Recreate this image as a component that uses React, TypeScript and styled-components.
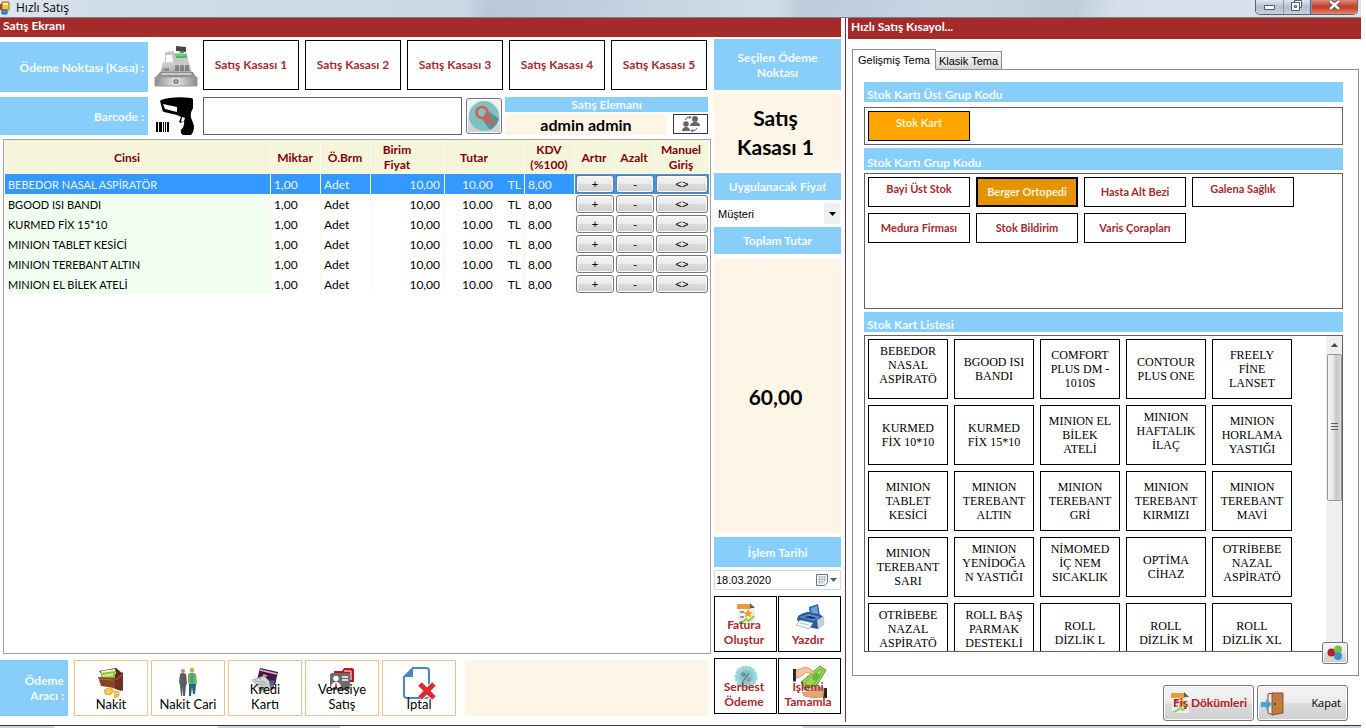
import React from "react";
import styled, { createGlobalStyle, css } from "styled-components";

const sky = "#87cefa";
const cream = "#fdf5e6";
const brick = "#a52a2a";
const sans = `Lato, "Open Sans", sans-serif`;

const GlobalStyle = createGlobalStyle`
  * { box-sizing: border-box; }
  body { margin: 0; background: #fff; font: 12px/15px ${sans}; color: #000; }
  button, input, select { font: inherit; color: inherit; margin: 0; padding: 0; border-radius: 0; }
  svg { display: block; flex: none; }
`;

const Window = styled.div`
  display: flex;
  flex-direction: column;
  height: 100vh;
  min-height: 640px;
  padding-right: 5px;
  overflow: hidden;
`;

/* ---------- window frame ---------- */

const TitleBar = styled.header`
  display: flex;
  flex: none;
  height: 18px;
  border-bottom: 1px solid #7d7f86;
  background: linear-gradient(100deg, #dfe7ef 0%, #cfdbe8 8%, #cbd8e6 34%, #b9c7d6 36%, #c9d6e4 50%, #d0dce9 57%, #bccbd9 59%, #c9d7e5 70%, #c0cedc 79%, #d4dfea 82%, #d9e2ec 100%);
`;

const WindowTitle = styled.h1`
  flex: 1;
  margin: 0;
  padding-left: 6px;
  font: 400 12px/16px "Open Sans", sans-serif;
`;

const WindowButtons = styled.div`
  display: flex;
  height: 15px;
  margin-right: 3px;
  border: 1px solid #5d6470;
  border-top: 0;
  border-radius: 0 0 5px 5px;
  overflow: hidden;
`;

const WindowButton = styled.button<{ $close?: boolean }>`
  display: flex;
  justify-content: center;
  width: ${(p) => (p.$close ? 47 : 27)}px;
  border: 0;
  border-left: ${(p) => (p.$close ? "1px solid #5d6470" : "0")};
  background: ${(p) =>
    p.$close
      ? "linear-gradient(#d98b7c, #c1402a 45%, #c9452c 60%, #e08a6e)"
      : "linear-gradient(#dfe6ee, #b3bfcd 50%, #c6d1dd)"};
  & + & { box-shadow: inset 1px 0 #8b95a3; }
`;

const StatusEdge = styled.footer`
  flex: none;
  height: 3px;
  border-top: 1px solid #33373c;
  background: linear-gradient(90deg, #cdd6de 4%, #fff 4%, #fff 16%, #cdd6de 16%, #cdd6de 25%, #fff 25%, #fff 59%, #cdd6de 59%);
`;

const Body = styled.div`
  display: flex;
  flex: 1;
  min-height: 0;
`;

const PaneTitle = styled.h2<{ $tall?: boolean }>`
  flex: none;
  height: ${(p) => (p.$tall ? 21 : 19)}px;
  margin: 0;
  padding: ${(p) => (p.$tall ? 1 : 0)}px 3px 0;
  background: ${brick};
  color: #fff;
  font: 700 12px/15px ${sans};
`;

/* ---------- sale pane ---------- */

const SalePane = styled.main`
  display: flex;
  flex-direction: column;
  flex: 1;
  min-width: 0;
`;

const SaleColumns = styled.div`
  display: flex;
  flex: 1;
  gap: 3px;
  min-height: 0;
`;

const SaleColumn = styled.div`
  display: flex;
  flex-direction: column;
  flex: 1;
  min-width: 0;
  padding: 3px 0 9px;
`;

const Row = styled.div<{ $height: number }>`
  display: flex;
  flex: none;
  align-items: flex-end;
  height: ${(p) => p.$height}px;
  padding-right: 3px;
  & + & { margin-top: 5px; }
`;

const SideLabel = styled.div<{ $width: number; $height: number }>`
  display: flex;
  align-items: center;
  justify-content: flex-end;
  width: ${(p) => p.$width}px;
  height: ${(p) => p.$height}px;
  padding-right: 4px;
  background: ${sky};
  color: #f5fbff;
  font-weight: 700;
  text-align: right;
`;

const IconSlot = styled.div`
  display: flex;
  align-self: center;
  justify-content: center;
  width: 55px;
`;

const TillList = styled.div`
  display: flex;
  flex: 1;
  gap: 6px;
  height: 52px;
  padding: 0 1px 2px 0;
`;

const outlined = css`
  border: 1px solid #000;
  background: #fff;
  color: ${brick};
  font-weight: 700;
`;

const TillButton = styled.button`
  ${outlined}
  flex: 1;
  padding-bottom: 1px;
`;

const BarcodeInput = styled.input`
  flex: 1;
  min-width: 0;
  height: 38px;
  padding: 0 6px;
  border: 1px solid #5b5d63;
  background: #fff;
`;

const glossy = css`
  border: 1px solid #74777b;
  border-radius: 3px;
  background: linear-gradient(#f4f4f4, #ebebeb 48%, #dcdcdc 52%, #cfcfcf);
  box-shadow: inset 0 0 0 1px #fcfcfc;
`;

const SearchButton = styled.button`
  ${glossy}
  display: grid;
  place-items: center;
  width: 36px;
  height: 36px;
  margin: 0 3px 1px 4px;
`;

const Seller = styled.section`
  display: flex;
  flex-wrap: wrap;
  align-content: space-between;
  justify-content: space-between;
  width: 203px;
  height: 38px;
`;

const SellerTitle = styled.h3`
  width: 100%;
  margin: 0;
  background: ${sky};
  color: #f5fbff;
  font: 700 12px/15px ${sans};
  text-align: center;
`;

const SellerName = styled.div`
  width: 162px;
  background: ${cream};
  font: 700 16px/21px ${sans};
  text-align: center;
`;

const SellerButton = styled.button`
  display: grid;
  place-items: center;
  width: 35px;
  height: 20px;
  border: 1px solid #33373d;
  background: #fff;
`;

/* ---------- basket table ---------- */

const BasketFrame = styled.div`
  flex: 1;
  min-height: 0;
  margin: 4px 0 6px 3px;
  padding: 0 1px;
  border: 1px solid #a0a0a0;
  overflow: hidden;
`;

const Basket = styled.table`
  width: 100%;
  border-collapse: separate;
  border-spacing: 0;
  table-layout: fixed;
  thead tr { height: 34px; }
`;

const Col = styled.col<{ $w?: number }>`
  width: ${(p) => (p.$w ? p.$w + "px" : "auto")};
`;

const HeadCell = styled.th<{ $sortable?: boolean }>`
  padding: 0 ${(p) => (p.$sortable ? 21 : 1)}px 0 0;
  background: #f5f5dc;
  color: #800000;
  border-right: 1px solid #fbfbef;
`;

const BasketRow = styled.tr<{ $selected: boolean }>`
  height: 20px;
  color: ${(p) => (p.$selected ? "#e9f4ff" : "#000")};
  background: ${(p) => (p.$selected ? "#3399ff" : "#fff")};
  td:first-child {
    background: ${(p) => (p.$selected ? "#3399ff" : "#f0fff0")};
    font-size: 11px;
  }
`;

const Cell = styled.td<{ $right?: boolean; $pad?: number }>`
  height: 20px;
  padding: 1px ${(p) => p.$pad ?? 3}px 0 3px;
  border-right: 1px solid ${cream};
  text-align: ${(p) => (p.$right ? "right" : "left")};
  white-space: nowrap;
  line-height: 15px;
`;

const Currency = styled.span`
  margin-left: 15px;
`;

const ActionCell = styled.td`
  height: 20px;
  padding: 0 1px;
`;

const CellButton = styled.button`
  ${glossy}
  display: block;
  width: 100%;
  height: 18px;
  color: #000;
  font: 11px/14px "Liberation Sans", sans-serif;
`;

/* ---------- payment tools ---------- */

const PaymentList = styled.div`
  display: flex;
  gap: 3px;
  padding: 0 9px 0 6px;
`;

const IconTile = styled.button<{ $framed?: boolean }>`
  position: relative;
  display: flex;
  align-items: flex-end;
  justify-content: center;
  height: 56px;
  background: #fff;
  ${(p) =>
    p.$framed
      ? css`
          flex: 1;
          border: 1px solid #000;
          color: ${brick};
          font-weight: 700;
          padding: 0 3px 4px 0;
        `
      : css`
          width: 74px;
          border: 1px solid #ecc291;
          font-size: 13px;
          padding: 0 0 3px;
        `}
  svg {
    position: absolute;
    top: 6px;
    left: 50%;
    transform: translateX(-50%);
  }
  span { position: relative; }
`;

const PaymentNote = styled.div`
  flex: 1;
  height: 56px;
  background: ${cream};
`;

/* ---------- totals column ---------- */

const TotalsColumn = styled.aside`
  display: flex;
  flex-direction: column;
  width: 127px;
  gap: 3px;
  padding: 2px 0 11px;
`;

const TotalsTitle = styled.h3<{ $height: number }>`
  display: grid;
  place-items: center;
  flex: none;
  height: ${(p) => p.$height}px;
  margin: 0;
  padding: 0 12px;
  background: ${sky};
  color: #f5fbff;
  font: 700 12px/15px ${sans};
  text-align: center;
`;

const TotalsValue = styled.div<{ $fill?: boolean }>`
  display: grid;
  place-items: center;
  height: 77px;
  padding: 0 20px 0 16px;
  background: ${cream};
  font: 700 21px/29px ${sans};
  text-align: center;
  ${(p) => p.$fill && css`flex: 1; height: auto; margin: 2px 0 1px;`}
`;

const PickerRow = styled.div<{ $framed?: boolean }>`
  position: relative;
  flex: none;
  height: ${(p) => (p.$framed ? 20 : 21)}px;
  border: ${(p) => (p.$framed ? "1px solid #d5dbe3" : "0")};
  font: 12px/18px "Liberation Sans", sans-serif;
`;

const PriceSelect = styled.select`
  width: 100%;
  height: 100%;
  padding-left: 4px;
  border: 0;
  background: #fff;
  appearance: none;
  font-size: 11px;
`;

const DateInput = styled.input`
  width: 100%;
  height: 100%;
  padding-left: 1px;
  border: 0;
  background: #fff;
  font-size: 11px;
`;

const PickerMark = styled.span<{ $plain?: boolean }>`
  position: absolute;
  top: 0;
  right: 1px;
  bottom: 0;
  display: flex;
  align-items: center;
  justify-content: center;
  gap: 2px;
  width: ${(p) => (p.$plain ? 26 : 16)}px;
  background: ${(p) => (p.$plain ? "#fff" : "#efefef")};
  pointer-events: none;
`;

const TileGrid = styled.div`
  display: flex;
  flex: none;
  gap: 1px;
  margin-top: 3px;
`;

/* ---------- shortcut pane ---------- */

const Divider = styled.div`
  width: 1px;
  margin: 0 2px 3px 4px;
  background: #8b2a34;
`;

const ShortcutPane = styled.aside`
  display: flex;
  flex-direction: column;
  width: 513px;
`;

const Tabs = styled.div`
  position: relative;
  display: flex;
  align-items: flex-end;
  flex: none;
  height: 31px;
  margin: 0 2px -1px 4px;
`;

const Tab = styled.button<{ $active?: boolean }>`
  width: ${(p) => (p.$active ? 84 : 66)}px;
  height: ${(p) => (p.$active ? 21 : 19)}px;
  border: 1px solid #8a8c91;
  border-bottom-color: ${(p) => (p.$active ? "#fff" : "#8a8c91")};
  border-left-width: ${(p) => (p.$active ? 1 : 0)}px;
  background: ${(p) => (p.$active ? "#fff" : "linear-gradient(#f3f3f3, #ebebeb 50%, #d4d4d4)")};
  font: 11px/16px "Liberation Sans", sans-serif;
  white-space: nowrap;
`;

const TabPanel = styled.div`
  display: flex;
  flex-direction: column;
  flex: 1;
  gap: 3px;
  min-height: 0;
  margin: 0 2px 9px 4px;
  padding: 12px 15px 23px 11px;
  border: 1px solid #8a8c91;
`;

const GroupTitle = styled.h3<{ $tall?: boolean }>`
  flex: none;
  height: ${(p) => (p.$tall ? 22 : 20)}px;
  margin: 0;
  padding: ${(p) => (p.$tall ? 7 : 5)}px 3px 0;
  background: ${sky};
  color: #f5fbff;
  font: 700 12px/15px ${sans};
`;

const GroupBox = styled.div<{ $height: number; $spaced?: boolean }>`
  display: flex;
  flex-wrap: wrap;
  align-content: flex-start;
  flex: none;
  gap: 6px;
  height: ${(p) => p.$height}px;
  margin-top: ${(p) => (p.$spaced ? 2 : 0)}px;
  padding: 3px;
  border: 1px solid #5f6165;
`;

const GroupButton = styled.button<{ $state?: "open" | "picked"; $raised?: boolean }>`
  ${outlined}
  width: 102px;
  height: 30px;
  padding-bottom: ${(p) => (p.$raised ? 7 : 1)}px;
  font-size: 11px;
  ${(p) => p.$state === "open" && css`background: #ffa500; color: #fff4d8;`}
  ${(p) => p.$state === "picked" && css`background: #e59400; color: #fff4d8; border-width: 2px;`}
`;

const StockBox = styled.div`
  position: relative;
  display: flex;
  flex: 1;
  min-height: 0;
  border: 1px solid #5f6165;
`;

const StockCards = styled.div`
  display: flex;
  flex-wrap: wrap;
  align-content: flex-start;
  flex: 1;
  gap: 6px;
  padding: 3px 0 0 3px;
  overflow: hidden;
`;

const StockCard = styled.button<{ $raised?: boolean }>`
  width: 80px;
  height: 60px;
  padding-bottom: ${(p) => (p.$raised ? 8 : 0)}px;
  border: 1px solid #000;
  background: #fff;
  font: 12px/14px "Liberation Serif", serif;
  white-space: pre-line;
`;

const ScrollTrack = styled.div`
  display: flex;
  flex-direction: column;
  align-items: center;
  width: 16px;
  background: #efefef;
`;

const ScrollThumb = styled.div`
  display: grid;
  place-items: center;
  width: 15px;
  height: 147px;
  margin-top: 6px;
  border: 1px solid #979797;
  border-radius: 2px;
  background: linear-gradient(90deg, #f5f5f5, #e3e4e6 45%, #c6c7cb 60%, #d9dadd);
`;

const ColorButton = styled.button`
  ${glossy}
  position: absolute;
  right: -6px;
  bottom: -13px;
  display: grid;
  place-items: center;
  width: 26px;
  height: 22px;
`;

const PaneActions = styled.div`
  display: flex;
  justify-content: flex-end;
  gap: 3px;
  padding: 0 13px 4px 0;
`;

const PaneButton = styled.button<{ $strong?: boolean }>`
  ${glossy}
  position: relative;
  display: flex;
  align-items: center;
  justify-content: flex-end;
  width: 91px;
  height: 36px;
  padding-right: 6px;
  font: ${(p) => (p.$strong ? `700 12px/16px ${sans}` : `11px/16px "Open Sans", sans-serif`)};
  color: ${(p) => (p.$strong ? "#b02028" : "#000")};
  white-space: nowrap;
  svg {
    position: absolute;
    top: 6px;
    left: ${(p) => (p.$strong ? 6 : 3)}px;
  }
  span { position: relative; }
`;

/* ---------- drawings ---------- */

const FormIcon = () => (
  <svg width="10" height="16" viewBox="0 0 10 16">
    <path d="M0 4h3v6H0z" fill="#a33b2c" />
    <path d="M2 2h7v8H2z" fill="#f3c33c" stroke="#9a7420" />
    <path d="M3 3h5v2H3z" fill="#fff0a8" />
    <path d="M2 10h5v4H2z" fill="#4d8fd6" stroke="#2c5c94" />
  </svg>
);

const RegisterIcon = () => (
  <svg width="44" height="44" viewBox="0 0 44 44">
    <defs>
      <linearGradient id="steel" x1="0" x2="0" y1="0" y2="1">
        <stop offset="0" stopColor="#d6d6d6" />
        <stop offset="1" stopColor="#a2a2a2" />
      </linearGradient>
      <linearGradient id="drawer" x1="0" x2="1">
        <stop offset="0" stopColor="#8c8c8c" />
        <stop offset=".5" stopColor="#e6e6e6" />
        <stop offset="1" stopColor="#8c8c8c" />
      </linearGradient>
    </defs>
    <path d="M22 2l10 1v5l-10-1z" fill="#44484a" />
    <path d="M26 7h4v3h-4z" fill="#777" />
    <path d="M11 8l9-1v13h-9z" fill="#c6c6c6" />
    <path d="M9 18h26l3 12H6z" fill="url(#steel)" />
    <path d="M20 9h13l2 11H20z" fill="#c9c9c9" />
    <path d="M21 10h11l1 4H22z" fill="#3fbf55" />
    <path d="M22 11h9" stroke="#9be6a4" />
    <path d="M12 11h6l1 7h-7z" fill="#fff" />
    <path d="M21 22h14M21 24h15M21 26h15" stroke="#4c4c4c" strokeDasharray="4 1" />
    <path d="M10 24h5v3h-6z" fill="#8d8d8d" />
    <path d="M6 28h33l3 5H2z" fill="#8f8f8f" />
    <path d="M8 29h29l1 2H7z" fill="#c9c9c9" />
    <path d="M1 33h42v9H1z" fill="url(#drawer)" stroke="#9a9a9a" />
    <circle cx="22" cy="37.500" r="2.500" fill="#777" />
    <circle cx="22" cy="37.500" r="1" fill="#ddd" />
  </svg>
);

const ScannerIcon = () => (
  <svg width="42" height="38" viewBox="0 0 42 38">
    <path d="M6 3Q18-1 36 1L38 2V11Q34 18 37 23L39 29Q39 35 36 38H28Q25 36 26 33 30 29 29 24L26 26 24 25 26 20 22 18 9 15Q7 14 7 11L5 4z" fill="#000" />
    <path d="M8 7L22 10V15L10 12z" fill="#fff" />
    <path d="M27 20l3 1-1 3-3 1z" fill="#fff" />
    <path d="M2 25v10M6 25v10M13 25v10" stroke="#000" strokeWidth="2" />
    <path d="M4.500 25v10M8.500 25v10M10.500 25v10" stroke="#000" strokeWidth="1" />
  </svg>
);

const SearchIcon = () => (
  <svg width="30" height="30" viewBox="0 0 30 30">
    <circle cx="15" cy="15" r="15" fill="#7fc0c3" />
    <path d="M18 9l12 9Q27 26 21 29L13 18z" fill="#5c9092" />
    <circle cx="13" cy="11.500" r="5.500" fill="none" stroke="#e0574c" strokeWidth="2.600" />
    <path d="M17 16l5 5" stroke="#e0574c" strokeWidth="4" strokeLinecap="round" />
  </svg>
);

const SwapUsersIcon = () => (
  <svg width="20" height="16" viewBox="0 0 20 16" fill="#666">
    <circle cx="14" cy="3" r="3" />
    <path d="M9 10q0-3 3.500-4h3Q19 7 19 10z" />
    <circle cx="5" cy="8" r="2.800" />
    <path d="M1 15q0-3 3-4h2q3 1 3 4z" />
    <path d="M4 4q1-3 5-3M16 12q-1 3-5 3" fill="none" stroke="#666" />
    <path d="M8 0l3 1-3 2zM12 13l-3 2 3 1z" />
  </svg>
);

const WalletIcon = () => (
  <svg width="28" height="32" viewBox="0 0 28 32">
    <path d="M2 4L19 1l6 5-1 18-8-3z" fill="#5c2b1c" />
    <path d="M4 4l14-2 1 5-14 3z" fill="#fff3c8" />
    <path d="M4 6l14-2v7L4 12z" fill="#8ac43f" />
    <path d="M5 8l11-2v3L6 10z" fill="#d8ea8c" />
    <path d="M1 10l17 1v10L4 19z" fill="#8a4128" />
    <path d="M18 11l8-6v19l-8-4z" fill="#6e2f1e" />
    <path d="M2 12l15 1M19 13l6-5" stroke="#b86b48" />
    <path d="M7 23l7-3 3 4-4 4-5-1zM18 24l4 1v4l-5 2z" fill="#f2ba3b" stroke="#d4902a" strokeWidth=".6" />
    <path d="M9 24l4-2M10 26l4-2M18 27l3-1" stroke="#fff0b0" />
  </svg>
);

const PeopleIcon = () => (
  <svg width="20" height="30" viewBox="0 0 20 30">
    <circle cx="5" cy="4" r="2" fill="#b98a6c" />
    <path d="M2 7q3-2 6 0l1 9-1 3-1 10H5l0-8-1 8H3L2 18 1 15z" fill="#5b5d61" />
    <circle cx="14" cy="3" r="2.200" fill="#d2a04d" />
    <path d="M12 2q2-3 4 0z" fill="#f0c52c" />
    <path d="M10 7q4-3 8 0l1 9-1 2h-7l-1-3z" fill="#78b544" />
    <path d="M13 6h2l1 10h-4z" fill="#3f9bb8" />
    <path d="M11 17h7l-1 10h-2l-1-7-1 9h-2z" fill="#26627f" />
  </svg>
);

const CardsIcon = () => (
  <svg width="28" height="28" viewBox="0 0 28 28">
    <path d="M9 1l18 4-3 13-18-5z" fill="#4a1942" />
    <path d="M9 3l17 4M12 8l4 1" stroke="#d9b7cf" strokeWidth="1.500" />
    <path d="M1 13l12-4 8 8-11 5z" fill="#d6d6d6" stroke="#999" strokeWidth=".7" />
    <path d="M4 14l11 2M6 17l10 1M8 11l9 8" stroke="#a8a8a8" />
    <path d="M6 19l14-3 2 6-13 5z" fill="#c6c9cc" />
    <path d="M18 14l5-1v5l-4 1z" fill="#2f69a8" />
    <path d="M19 19l4-1v4l-3 1z" fill="#d8402f" />
    <path d="M8 21l5-1v3l-4 1z" fill="#55a348" />
  </svg>
);

const IdCardsIcon = () => (
  <svg width="24" height="24" viewBox="0 0 24 24">
    <path d="M4 6V4h8l2-3h8q2 0 2 2v12h-5V6z" fill="#c41320" />
    <path d="M14 4h7v9" fill="none" stroke="#fff" />
    <rect x="0" y="6" width="20" height="17" rx="2" fill="#6c6c6c" />
    <circle cx="6" cy="11.500" r="2.700" fill="#fff" />
    <path d="M1 21q0-5 4-6h2q4 1 4 6z" fill="#fff" />
    <path d="M6 15l1 5-1 1-1-1z" fill="#c41320" />
    <path d="M12 10h6M12 13h6" stroke="#fff" strokeWidth="1.500" />
  </svg>
);

const CancelIcon = () => (
  <svg width="34" height="34" viewBox="0 0 34 34">
    <path d="M11 1h13q3 0 3 3v24q0 3-3 3H5q-3 0-3-3V10z" fill="#fff" stroke="#4a86c5" strokeWidth="2" />
    <path d="M11 1v9H2z" fill="#4a86c5" />
    <path d="M18 17l14 14M32 17L18 31" stroke="#fff" strokeWidth="7" />
    <path d="M18 17l14 14M32 17L18 31" stroke="#dd2c2f" strokeWidth="5" />
  </svg>
);

const ReportIcon = () => (
  <svg width="20" height="22" viewBox="0 0 20 22">
    <path d="M2 1h13l4 4v16H2z" fill="#eceff0" />
    <path d="M1 1h14v5H1z" fill="#ee9b35" />
    <path d="M14 0l5 5h-5z" fill="#56616a" />
    <path d="M4 9h4M4 14h4" stroke="#8b979d" strokeWidth="2" />
    <path d="M12 6l1.500 3 3 .5-2 2 .5 3-3-1.500-3 1.500.6-3-2-2 3-.5z" fill="#f6a21d" />
    <path d="M3 20q5-1 7-4l3 2 5-5" fill="none" stroke="#90cf52" strokeWidth="2" />
  </svg>
);

const PrinterIcon = () => (
  <svg width="30" height="28" viewBox="0 0 30 28">
    <path d="M14 4l9-3 2 12-10 1z" fill="#2f66ad" />
    <path d="M16 5l6-2 1 8-6 1z" fill="#6ba3de" />
    <path d="M3 13q6-4 11-4l12 3q4 3 3 9l-6 5-15-3-6-6z" fill="#2a5896" />
    <path d="M4 14l10-3 11 3-6 4z" fill="#5c93d3" />
    <path d="M8 14l7-1 7 2-4 1z" fill="#14305a" />
    <path d="M22 17l7-4v8l-6 5z" fill="#c5cdd7" />
    <path d="M5 17l13 3-4 6-13-4z" fill="#f1f6fa" stroke="#97a8b9" strokeWidth=".7" />
    <path d="M5 20l9 2" stroke="#a9c8e6" />
  </svg>
);

const PercentIcon = () => (
  <svg width="24" height="24" viewBox="0 0 24 24">
    <circle cx="12" cy="12" r="10.500" fill="#9ed5da" />
    <circle cx="12" cy="12" r="10.500" fill="none" stroke="#9ed5da" strokeWidth="2" strokeDasharray="3 1" />
    <circle cx="12" cy="12" r="7" fill="#86c6cc" />
    <g stroke="#3f5c6e" fill="none">
      <path d="M15 8l-6 8" />
      <circle cx="9.500" cy="9.500" r="1.500" />
      <circle cx="14.500" cy="14.500" r="1.500" stroke="#d75a4e" />
    </g>
  </svg>
);

const HandoverIcon = () => (
  <svg width="34" height="34" viewBox="0 0 34 34">
    <path d="M8 17L27 1l6 4-9 15-12 5z" fill="#9ad65a" stroke="#5d9c2c" />
    <path d="M12 17L27 4l3 2-8 12-8 4z" fill="none" stroke="#6fb03a" />
    <ellipse cx="23" cy="12" rx="4" ry="3" fill="#6fb03a" transform="rotate(-45 23 12)" />
    <path d="M0 4h3v12H0z" fill="#22252a" />
    <path d="M3 5l10-3q7 2 8 6l-2 1-6-2-3 3q-3 3-7 3z" fill="#f3c49b" stroke="#b97f52" strokeWidth=".6" />
    <path d="M31 23h3v10h-4z" fill="#22252a" />
    <path d="M31 23l-9-1-7 5-6 0 2 4 10 2 9-1z" fill="#e6a678" stroke="#b97f52" strokeWidth=".6" />
  </svg>
);

const DoorIcon = () => (
  <svg width="23" height="24" viewBox="0 0 23 24">
    <path d="M7 2l5-1v22l-5-2z" fill="#f4efe6" stroke="#7b4a24" />
    <path d="M11 1h11v20l-11 2z" fill="#c27a41" stroke="#8c5226" />
    <circle cx="14" cy="12" r="1" fill="#5b3115" />
    <path d="M0 10h5V7l6 5-6 6v-3H0z" fill="#4aa3d8" />
  </svg>
);

const ColorsIcon = () => (
  <svg width="16" height="16" viewBox="0 0 16 16">
    <circle cx="4.500" cy="7.500" r="4" fill="#b3202a" />
    <circle cx="11" cy="4.500" r="4" fill="#7cc242" />
    <circle cx="11" cy="11" r="4" fill="#3a94cf" />
  </svg>
);

const DownArrow = ({ color }: { color: string }) => (
  <svg width="7" height="4" viewBox="0 0 7 4">
    <path d="M0 0h7L3.500 4z" fill={color} />
  </svg>
);

const CalendarIcon = () => (
  <svg width="12" height="12" viewBox="0 0 12 12">
    <path d="M.5.5h11v8l-3 3h-8z" fill="#f3f5f8" stroke="#6a7280" />
    <path d="M2 3h8M2 5.500h8M2 8h6M3.500 2v8M6 2v8M8.500 2v6" stroke="#a8b0bd" strokeWidth=".8" />
  </svg>
);

/* ---------- data ---------- */

const tills = [1, 2, 3, 4, 5].map((n) => `Satış Kasası ${n}`);

const basket = [
  "BEBEDOR NASAL ASPİRATÖR",
  "BGOOD ISI BANDI",
  "KURMED FİX 15*10",
  "MINION TABLET KESİCİ",
  "MINION TEREBANT ALTIN",
  "MINION EL BİLEK ATELİ",
];

const payments = [
  { label: "Nakit", icon: <WalletIcon /> },
  { label: "Nakit Cari", icon: <PeopleIcon /> },
  { label: "Kredi\nKartı", icon: <CardsIcon /> },
  { label: "Veresiye\nSatış", icon: <IdCardsIcon /> },
  { label: "İptal", icon: <CancelIcon /> },
];

const groups: { label: string; raised?: boolean; picked?: boolean }[] = [
  { label: "Bayi Üst Stok", raised: true },
  { label: "Berger Ortopedi", picked: true },
  { label: "Hasta Alt Bezi" },
  { label: "Galena Sağlık", raised: true },
  { label: "Medura Firması" },
  { label: "Stok Bildirim" },
  { label: "Varis Çorapları" },
];

const stock: [string, boolean?][] = [
  ["BEBEDOR\nNASAL\nASPİRATÖ", true],
  ["BGOOD ISI\nBANDI"],
  ["COMFORT\nPLUS DM -\n1010S"],
  ["CONTOUR\nPLUS ONE"],
  ["FREELY\nFİNE\nLANSET"],
  ["KURMED\nFİX 10*10"],
  ["KURMED\nFİX 15*10"],
  ["MINION EL\nBİLEK\nATELİ"],
  ["MINION\nHAFTALIK\nİLAÇ", true],
  ["MINION\nHORLAMA\nYASTIĞI"],
  ["MINION\nTABLET\nKESİCİ"],
  ["MINION\nTEREBANT\nALTIN"],
  ["MINION\nTEREBANT\nGRİ"],
  ["MINION\nTEREBANT\nKIRMIZI"],
  ["MINION\nTEREBANT\nMAVİ"],
  ["MINION\nTEREBANT\nSARI"],
  ["MINION\nYENİDOĞA\nN YASTIĞI", true],
  ["NİMOMED\nİÇ NEM\nSICAKLIK", true],
  ["OPTİMA\nCİHAZ"],
  ["OTRİBEBE\nNAZAL\nASPİRATÖ", true],
  ["OTRİBEBE\nNAZAL\nASPİRATÖ", true],
  ["ROLL BAŞ\nPARMAK\nDESTEKLİ", true],
  ["ROLL\nDİZLİK L"],
  ["ROLL\nDİZLİK M"],
  ["ROLL\nDİZLİK XL"],
];

const TileLabel = styled.span`
  white-space: pre-line;
`;

export default function App() {
  return (
    <Window>
      <GlobalStyle />
      <TitleBar>
        <FormIcon />
        <WindowTitle>Hızlı Satış</WindowTitle>
        <WindowButtons>
          <WindowButton aria-label="Simge durumuna küçült">
            <svg width="13" height="12" viewBox="0 0 13 12">
              <path d="M1.500 5.500h10v4h-10z" fill="#fff" stroke="#555b66" />
            </svg>
          </WindowButton>
          <WindowButton aria-label="Önceki boyut">
            <svg width="13" height="12" viewBox="0 0 13 12">
              <path d="M4.500 .5h7v7h-7z" fill="#fff" stroke="#555b66" />
              <path d="M1.500 2.500h8v8h-8z" fill="#fff" stroke="#555b66" />
              <path d="M4.500 5.500h2v2h-2z" fill="#b8c3d0" stroke="#555b66" />
            </svg>
          </WindowButton>
          <WindowButton $close aria-label="Pencereyi kapat">
            <svg width="13" height="12" viewBox="0 0 13 12">
              <path d="M2 1l9 8M11 1L2 9" stroke="#5b3a3a" strokeWidth="4" />
              <path d="M2 1l9 8M11 1L2 9" stroke="#fff" strokeWidth="2.400" />
            </svg>
          </WindowButton>
        </WindowButtons>
      </TitleBar>

      <Body>
        <SalePane>
          <PaneTitle>Satış Ekranı</PaneTitle>
          <SaleColumns>
            <SaleColumn>
              <Row $height={52}>
                <SideLabel $width={148} $height={50}>Ödeme Noktası (Kasa) :</SideLabel>
                <IconSlot><RegisterIcon /></IconSlot>
                <TillList>
                  {tills.map((t) => <TillButton key={t}>{t}</TillButton>)}
                </TillList>
              </Row>
              <Row $height={38}>
                <SideLabel as="label" htmlFor="barcode" $width={148} $height={38}>Barcode :</SideLabel>
                <IconSlot><ScannerIcon /></IconSlot>
                <BarcodeInput id="barcode" type="text" />
                <SearchButton aria-label="Ara"><SearchIcon /></SearchButton>
                <Seller>
                  <SellerTitle>Satış Elemanı</SellerTitle>
                  <SellerName>admin admin</SellerName>
                  <SellerButton aria-label="Satış elemanını değiştir"><SwapUsersIcon /></SellerButton>
                </Seller>
              </Row>

              <BasketFrame>
                <Basket>
                  <colgroup>
                    <Col />
                    <Col $w={50} />
                    <Col $w={50} />
                    <Col $w={74} />
                    <Col $w={80} />
                    <Col $w={50} />
                    <Col $w={40} />
                    <Col $w={40} />
                    <Col $w={54} />
                  </colgroup>
                  <thead>
                    <tr>
                      <HeadCell $sortable>Cinsi</HeadCell>
                      <HeadCell>Miktar</HeadCell>
                      <HeadCell>Ö.Brm</HeadCell>
                      <HeadCell $sortable>Birim Fiyat</HeadCell>
                      <HeadCell $sortable>Tutar</HeadCell>
                      <HeadCell>KDV (%100)</HeadCell>
                      <HeadCell>Artır</HeadCell>
                      <HeadCell>Azalt</HeadCell>
                      <HeadCell>Manuel Giriş</HeadCell>
                    </tr>
                  </thead>
                  <tbody>
                    {basket.map((name, i) => (
                      <BasketRow key={name} $selected={i === 0}>
                        <Cell>{name}</Cell>
                        <Cell>1,00</Cell>
                        <Cell>Adet</Cell>
                        <Cell $right $pad={4}>10,00</Cell>
                        <Cell $right>10.00<Currency>TL</Currency></Cell>
                        <Cell>8,00</Cell>
                        <ActionCell><CellButton aria-label="Artır">+</CellButton></ActionCell>
                        <ActionCell><CellButton aria-label="Azalt">-</CellButton></ActionCell>
                        <ActionCell><CellButton aria-label="Manuel giriş">&lt;&gt;</CellButton></ActionCell>
                      </BasketRow>
                    ))}
                  </tbody>
                </Basket>
              </BasketFrame>

              <Row $height={56}>
                <SideLabel $width={68} $height={56}>Ödeme<br />Aracı :</SideLabel>
                <PaymentList>
                  {payments.map((p) => (
                    <IconTile key={p.label}>
                      {p.icon}
                      <TileLabel>{p.label}</TileLabel>
                    </IconTile>
                  ))}
                </PaymentList>
                <PaymentNote />
              </Row>
            </SaleColumn>

            <TotalsColumn>
              <TotalsTitle $height={51}>Seçilen Ödeme Noktası</TotalsTitle>
              <TotalsValue>Satış Kasası 1</TotalsValue>
              <TotalsTitle $height={27}><label htmlFor="price">Uygulanacak Fiyat</label></TotalsTitle>
              <PickerRow>
                <PriceSelect id="price"><option>Müşteri</option></PriceSelect>
                <PickerMark><DownArrow color="#000" /></PickerMark>
              </PickerRow>
              <TotalsTitle $height={27}>Toplam Tutar</TotalsTitle>
              <TotalsValue $fill>60,00</TotalsValue>
              <TotalsTitle $height={30}><label htmlFor="date">İşlem Tarihi</label></TotalsTitle>
              <PickerRow $framed>
                <DateInput id="date" type="text" defaultValue="18.03.2020" />
                <PickerMark $plain><CalendarIcon /><DownArrow color="#4a5f7a" /></PickerMark>
              </PickerRow>
              <TileGrid>
                <IconTile $framed><ReportIcon /><TileLabel>{"Fatura\nOluştur"}</TileLabel></IconTile>
                <IconTile $framed><PrinterIcon /><TileLabel>Yazdır</TileLabel></IconTile>
              </TileGrid>
              <TileGrid>
                <IconTile $framed><PercentIcon /><TileLabel>{"Serbest\nÖdeme"}</TileLabel></IconTile>
                <IconTile $framed><HandoverIcon /><TileLabel>{"İşlemi\nTamamla"}</TileLabel></IconTile>
              </TileGrid>
            </TotalsColumn>
          </SaleColumns>
        </SalePane>

        <Divider />

        <ShortcutPane>
          <PaneTitle $tall>Hızlı Satış Kısayol...</PaneTitle>
          <Tabs role="tablist">
            <Tab role="tab" aria-selected="true" $active>Gelişmiş Tema</Tab>
            <Tab role="tab" aria-selected="false">Klasik Tema</Tab>
          </Tabs>
          <TabPanel role="tabpanel">
            <GroupTitle>Stok Kartı Üst Grup Kodu</GroupTitle>
            <GroupBox $height={38} $spaced>
              <GroupButton $state="open" $raised>Stok Kart</GroupButton>
            </GroupBox>
            <GroupTitle $tall>Stok Kartı Grup Kodu</GroupTitle>
            <GroupBox $height={136}>
              {groups.map((g) => (
                <GroupButton key={g.label} $raised={g.raised} $state={g.picked ? "picked" : undefined}>
                  {g.label}
                </GroupButton>
              ))}
            </GroupBox>
            <GroupTitle>Stok Kart Listesi</GroupTitle>
            <StockBox>
              <StockCards>
                {stock.map(([label, raised], i) => (
                  <StockCard key={i} $raised={raised}>{label}</StockCard>
                ))}
              </StockCards>
              <ScrollTrack>
                <svg width="7" height="12" viewBox="0 0 7 12">
                  <path d="M0 11h7L3.500 7z" fill="#444" />
                </svg>
                <ScrollThumb>
                  <svg width="7" height="9" viewBox="0 0 7 9">
                    <path d="M0 .5h7M0 3.500h7M0 6.500h7" stroke="#5c5f64" />
                  </svg>
                </ScrollThumb>
              </ScrollTrack>
              <ColorButton aria-label="Renkler"><ColorsIcon /></ColorButton>
            </StockBox>
          </TabPanel>
          <PaneActions>
            <PaneButton $strong><ReportIcon /><span>Fiş Dökümleri</span></PaneButton>
            <PaneButton><DoorIcon /><span>Kapat</span></PaneButton>
          </PaneActions>
        </ShortcutPane>
      </Body>
      <StatusEdge />
    </Window>
  );
}
